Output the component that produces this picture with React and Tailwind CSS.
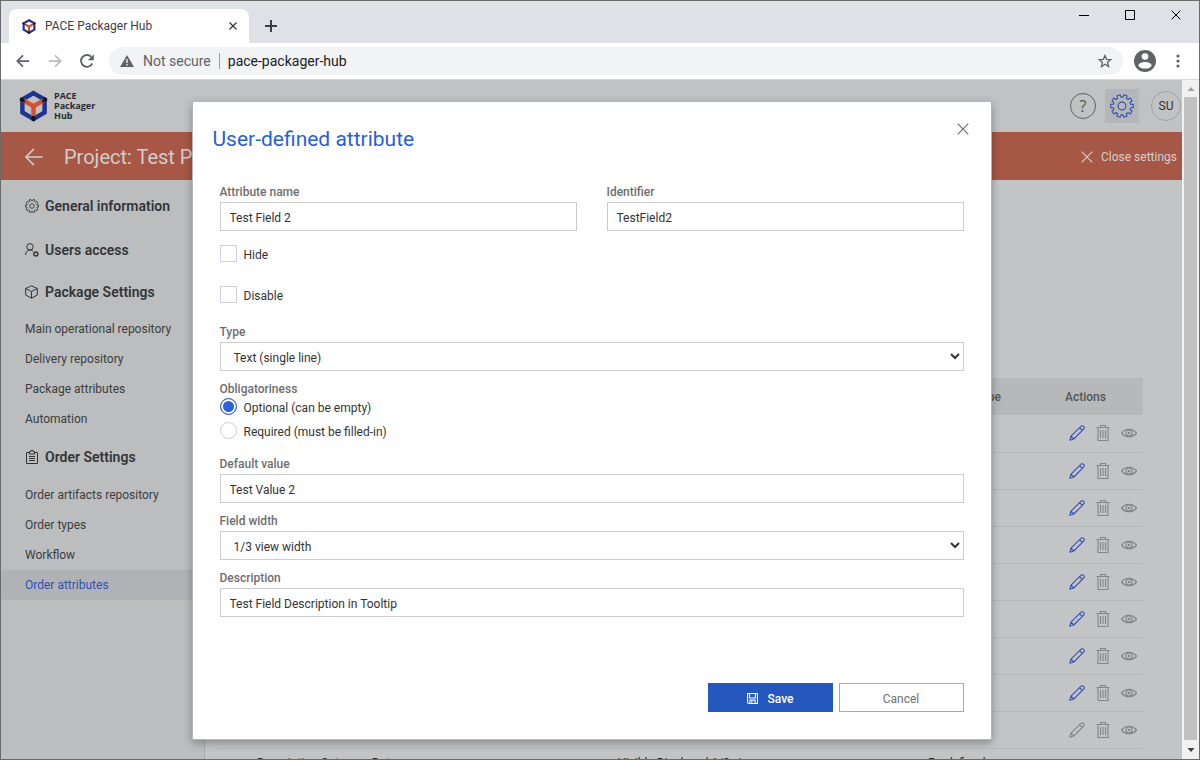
import { useState } from 'react';

const packageLinks = ['Main operational repository', 'Delivery repository', 'Package attributes', 'Automation'];
const orderLinks = ['Order artifacts repository', 'Order types', 'Workflow', 'Order attributes'];
const rows = [true, true, true, true, true, true, true, true, false];

function gearPath(teeth, outer, inner) {
    const step = (Math.PI * 2) / teeth;
    const point = (r, a) => `${(12 + r * Math.cos(a)).toFixed(2)} ${(12 + r * Math.sin(a)).toFixed(2)}`;
    let d = '';
    for (let i = 0; i < teeth; i++) {
        const a = i * step;
        d += `${i === 0 ? 'M' : 'L'}${point(inner, a - step * 0.32)}`;
        d += `L${point(outer, a - step * 0.23)}L${point(outer, a + step * 0.23)}`;
        d += `L${point(inner, a + step * 0.32)}`;
    }
    return d + 'Z';
}

function GearIcon({ className, strokeWidth = 1.1 }) {
    return (
        <svg className={className} viewBox="0 0 24 24" fill="none" stroke="currentColor" strokeWidth={strokeWidth} strokeLinejoin="round">
            <path d={gearPath(10, 11.4, 8.9)} />
            <circle cx="12" cy="12" r="3.9" />
        </svg>
    );
}

function Logo({ className }) {
    return (
        <svg className={className} viewBox="0 0 30 32" fill="none" strokeWidth="4.6">
            <path d="M15 2.7 26.5 9.3V22.7L15 29.3 3.5 22.7V9.3Z" stroke="#1e3590" />
            <path d="M5 10.5 15 16.3 25 10.5M15 16V27" stroke="#d5502d" />
            <path d="M.8 8.2 3.5 6.7 6.5 11.4 5.5 12.4.8 10.5ZM29.2 8.2 26.5 6.7 23.5 11.4 24.5 12.4 29.2 10.5ZM12.9 26.4H17.1V30.8L15 32 12.9 30.8Z" fill="#14161c" />
        </svg>
    );
}

function CrossIcon({ className, strokeWidth = 1.2 }) {
    return (
        <svg className={className} viewBox="0 0 12 12" fill="none" stroke="currentColor" strokeWidth={strokeWidth}>
            <path d="M.7.7 11.3 11.3M11.3.7.7 11.3" />
        </svg>
    );
}

function ArrowIcon({ className, strokeWidth = 1.8 }) {
    return (
        <svg className={className} viewBox="0 0 16 16" fill="none" stroke="currentColor" strokeWidth={strokeWidth}>
            <path d="M15 8H2M8 1.5 1.5 8 8 14.5" />
        </svg>
    );
}

function UserGearIcon() {
    return (
        <svg className="size-3.5" viewBox="0 0 14 14" fill="none" stroke="currentColor">
            <circle cx="5" cy="3.8" r="3.2" />
            <path d="M.5 12C.7 9 2.5 7 5 7c1.2 0 2.2.4 3 1.2" />
            <circle cx="10.8" cy="11" r="2" strokeWidth="1.4" />
        </svg>
    );
}

function BoxIcon() {
    return (
        <svg className="size-3.5" viewBox="0 0 14 14" fill="none" stroke="currentColor" strokeLinejoin="round">
            <path d="M6.5.8 12.3 3.5V10L6.5 13.2.7 10V3.5ZM.7 3.5 6.5 6.5 12.3 3.5M6.5 6.5V13" />
        </svg>
    );
}

function ClipboardIcon() {
    return (
        <svg className="size-3.5" viewBox="0 0 14 14" fill="none" stroke="currentColor">
            <path d="M4 2.5H1.5V13.5H12.5V2.5H10M4.5 1.5H6V.5H8V1.5H9.5V4H4.5ZM4 6.5H10M4 8.5H10M4 10.5H10" />
        </svg>
    );
}

function PencilIcon() {
    return (
        <svg className="size-4" viewBox="0 0 16 16" fill="none" stroke="currentColor" strokeWidth="1.1" strokeLinejoin="round">
            <path d="M.8 15.2 2 11.2 11.6 1.6C12.5.6 13.6.5 14.6 1.4 15.5 2.4 15.4 3.5 14.4 4.4L4.8 14ZM2 11.2 4.8 14M10.5 2.7 13.3 5.5" />
        </svg>
    );
}

function TrashIcon() {
    return (
        <svg className="h-4 w-3.5" viewBox="0 0 14 16" fill="none" stroke="currentColor" strokeWidth="1.1">
            <path d="M.5 2.5H13.5M4.5 2.5V.5H9.5V2.5M2 2.5V15.5H12V2.5M4.5 5V13M7 5V13M9.5 5V13" />
        </svg>
    );
}

function EyeIcon() {
    return (
        <svg className="h-4 w-4" viewBox="0 0 16 16" fill="none" stroke="currentColor" strokeWidth="1.2">
            <path d="M.5 8C2.7 5.3 5 4.3 8 4.3S13.3 5.3 15.5 8C13.3 10.7 11 11.7 8 11.7S2.7 10.7.5 8Z" />
            <circle cx="8" cy="8" r="3" />
            <circle cx="8" cy="8" r=".6" />
        </svg>
    );
}

function BrowserChrome() {
    return (
        <div className="shrink-0 border-b border-[#d5d7da] bg-[#dee1e6]">
            <div className="flex h-[42px] justify-between">
                <div className="flex items-end pl-2">
                    <div className="flex h-[34px] w-60 items-center rounded-t-lg bg-white pr-3 pl-[13px] text-[#3c4043]">
                        <Logo className="h-[15px] w-3.5" />
                        <span className="ml-[9px] flex-1 text-[12px]">PACE Packager Hub</span>
                        <button aria-label="Close tab"><CrossIcon className="size-2" strokeWidth={2} /></button>
                    </div>
                    <button aria-label="New tab" className="mb-[11px] ml-4">
                        <svg className="size-3" viewBox="0 0 12 12" stroke="#3c4043" strokeWidth="2"><path d="M6 0V12M0 6H12" /></svg>
                    </button>
                </div>
                <div className="flex h-7 items-center gap-9 pr-4.5 text-black">
                    <button aria-label="Minimize"><svg className="size-2.5" viewBox="0 0 10 10" stroke="currentColor"><path d="M0 5.5H10" /></svg></button>
                    <button aria-label="Maximize"><svg className="size-2.5" viewBox="0 0 10 10" fill="none" stroke="currentColor"><path d="M.5.5H9.5V9.5H.5Z" /></svg></button>
                    <button aria-label="Close"><CrossIcon className="size-2.5" /></button>
                </div>
            </div>
            <div className="flex h-9 items-center bg-white pr-[19px] pl-[15px] text-[#5f6368]">
                <button aria-label="Back"><ArrowIcon className="size-3.5" strokeWidth={2} /></button>
                <button aria-label="Forward" className="ml-[18px] text-[#b8babd]"><ArrowIcon className="size-3.5 rotate-180" strokeWidth={2} /></button>
                <button aria-label="Reload" className="ml-[18px]">
                    <svg className="size-3.5" viewBox="0 0 14 14"><path d="M12.3 9.5A5.9 5.9 0 1 1 11.2 2.8" fill="none" stroke="currentColor" strokeWidth="1.9" /><path d="M13.8.2V6.2H7.8Z" fill="currentColor" /></svg>
                </button>
                <div className="ml-[15px] flex h-7 flex-1 items-center rounded-full bg-[#f1f3f4] pr-[11px] pl-[11px] text-[14px]">
                    <svg className="h-3 w-3.5" viewBox="0 0 14 12"><path d="M7 0 14 12H0Z" fill="currentColor" /><path d="M7 4V8M7 9V10.5" stroke="#f1f3f4" strokeWidth="1.4" /></svg>
                    <span className="ml-[9px]">Not secure</span>
                    <span className="mx-2 h-4 w-px bg-[#9aa0a6]" />
                    <span className="flex-1 text-[#202124]">pace-packager-hub</span>
                    <button aria-label="Bookmark">
                        <svg className="size-3.5" viewBox="0 0 14 14" fill="none" stroke="currentColor" strokeWidth="1.3"><path d="M7 1.5 8.6 5.3 12.9 5.6 9.6 8.3 10.6 12.5 7 10.2 3.4 12.5 4.4 8.3 1.1 5.6 5.4 5.3Z" /></svg>
                    </button>
                </div>
                <button aria-label="Profile" className="ml-[11px]">
                    <svg className="size-[22px]" viewBox="0 0 22 22"><circle cx="11" cy="11" r="11" fill="currentColor" /><circle cx="11" cy="6.5" r="3.3" fill="#fff" /><ellipse cx="11" cy="15.3" rx="6.5" ry="3.3" fill="#fff" /></svg>
                </button>
                <button aria-label="Menu" className="ml-5">
                    <svg className="h-3.5 w-1" viewBox="0 0 4 14" fill="currentColor"><circle cx="2" cy="2" r="1.6" /><circle cx="2" cy="7" r="1.6" /><circle cx="2" cy="12" r="1.6" /></svg>
                </button>
            </div>
        </div>
    );
}

function TopBar() {
    return (
        <header className="flex h-[52px] shrink-0 items-center justify-between bg-[#c1c2c4] pr-px pl-[18px]">
            <div className="flex items-center gap-1.5">
                <Logo className="h-8 w-[29px]" />
                <div className="font-['Open_Sans',sans-serif] text-[9px] leading-[10px] font-bold text-[#2a2c30]">
                    <div>PACE</div>
                    <div>Packager</div>
                    <div>Hub</div>
                </div>
            </div>
            <div className="flex items-center">
                <button className="size-[26px] rounded-full border border-[#606060] font-['Open_Sans',sans-serif] text-[16px] leading-6 text-[#555]">?</button>
                <button aria-label="Settings" className="ml-[9px] flex size-[34px] items-center justify-center bg-[#b5b6b9] text-[#2e51ad]">
                    <GearIcon className="size-6" />
                </button>
                <button className="ml-3 size-[30px] rounded-full border border-[#a2a3a5] text-[12px] text-[#333]">SU</button>
            </div>
        </header>
    );
}

function SideHeading({ icon, children }) {
    return (
        <a href="#" className="flex items-center gap-1.5 pl-6 text-[14px] leading-5 font-semibold text-[#333537]">
            {icon}
            {children}
        </a>
    );
}

function SideLinks({ items, active }) {
    return (
        <ul>
            {items.map((item) => (
                <li key={item}>
                    <a
                        href="#"
                        className={`block rounded-l pl-6 text-[12px] leading-[30px] ${item === active ? 'bg-[#b1b2b5] text-[#2c52b4]' : 'text-[#3c3d40]'}`}
                    >
                        {item}
                    </a>
                </li>
            ))}
        </ul>
    );
}

function Sidebar() {
    return (
        <nav className="w-[204px] shrink-0 border-r border-[#a7a9ab] bg-[#bbbdbf] pt-4">
            <SideHeading icon={<GearIcon className="size-3.5" strokeWidth={1.5} />}>General information</SideHeading>
            <div className="mt-6">
                <SideHeading icon={<UserGearIcon />}>Users access</SideHeading>
            </div>
            <div className="mt-[22px] mb-3">
                <SideHeading icon={<BoxIcon />}>Package Settings</SideHeading>
            </div>
            <SideLinks items={packageLinks} />
            <div className="my-[13px]">
                <SideHeading icon={<ClipboardIcon />}>Order Settings</SideHeading>
            </div>
            <SideLinks items={orderLinks} active="Order attributes" />
        </nav>
    );
}

function AttributesTable() {
    return (
        <table className="w-full table-fixed border-collapse text-[12px] text-[#2a2a2a]">
            <colgroup>
                <col />
                <col className="w-[310px]" />
                <col className="w-[137px]" />
                <col className="w-[78px]" />
            </colgroup>
            <thead>
                <tr className="h-[37px] bg-[#b7b8ba] text-left text-[12px] text-[#555]">
                    <th className="pl-10 font-medium">Name</th>
                    <th className="font-medium">Properties</th>
                    <th className="font-medium">Attribute type</th>
                    <th className="font-medium">Actions</th>
                </tr>
            </thead>
            <tbody>
                {rows.map((editable, i) => (
                    <tr key={i} className="h-[37px] border-b border-[#b7b8ba]">
                        <td />
                        <td />
                        <td />
                        <td>
                            <div className="flex items-center gap-[11px] pl-1 text-[#858585]">
                                <button aria-label="Edit" className={editable ? 'text-[#3550b0]' : ''}><PencilIcon /></button>
                                <button aria-label="Delete"><TrashIcon /></button>
                                <button aria-label="Show"><EyeIcon /></button>
                            </div>
                        </td>
                    </tr>
                ))}
                <tr className="h-[37px] align-top leading-4">
                    <td className="pt-1.5 pl-10">Description Category Date</td>
                    <td className="pt-1.5">Visible Displayed 1/3 view</td>
                    <td className="pt-1.5">Predefined</td>
                    <td />
                </tr>
            </tbody>
        </table>
    );
}

function Field({ label, id, children }) {
    return (
        <div className="flex flex-1 flex-col">
            <label htmlFor={id} className="text-[12px] leading-5 font-medium text-[#6e6e6e]">{label}</label>
            {children}
        </div>
    );
}

function TextField({ label, id, value }) {
    return (
        <Field label={label} id={id}>
            <input id={id} type="text" defaultValue={value} className="h-[29px] w-full border border-[#ccc] bg-white px-[9px] pt-0.5 text-[12px] text-[#333]" />
        </Field>
    );
}

function SelectField({ label, id, options }) {
    return (
        <Field label={label} id={id}>
            <select id={id} className="h-[29px] w-full border border-[#ccc] bg-white pt-0.5 pl-[9px] text-[12px] text-[#333]">
                {options.map((o) => <option key={o}>{o}</option>)}
            </select>
        </Field>
    );
}

function Check({ label }) {
    return (
        <label className="flex h-[18px] gap-[7px] text-[12px] leading-5 text-[#333]">
            <input type="checkbox" className="size-[17px] appearance-none border border-[#cfcfe0] checked:bg-[#2b62d9]" />
            {label}
        </label>
    );
}

function Radio({ label, checked, onChange }) {
    return (
        <label className="flex h-[18px] gap-[7px] text-[12px] leading-5 text-[#333]">
            <input
                type="radio"
                name="obligatoriness"
                checked={checked}
                onChange={onChange}
                className="size-[17px] appearance-none rounded-full border border-[#ccc] checked:border-[#2b62d9] checked:bg-[#2b62d9] checked:shadow-[inset_0_0_0_2px_white]"
            />
            {label}
        </label>
    );
}

function AttributeDialog() {
    const [required, setRequired] = useState(false);

    return (
        <div role="dialog" aria-labelledby="dialog-title" className="w-full max-w-[800px] rounded-xs border border-[#b8b8b8] bg-white pb-[27px] shadow-[0_3px_9px_rgba(0,0,0,0.3)]">
            <div className="flex items-start justify-between pt-[21px] pr-[22px] pl-5">
                <h1 id="dialog-title" className="pt-0.5 text-[21px] leading-7 text-[#2b5fd0]">User-defined attribute</h1>
                <button aria-label="Close" className="text-[#707070]"><CrossIcon className="size-3" /></button>
            </div>
            <form className="px-[27px] pt-[29px]" onSubmit={(e) => e.preventDefault()}>
                <div className="flex gap-[30px]">
                    <TextField label="Attribute name" id="attr-name" value="Test Field 2" />
                    <TextField label="Identifier" id="identifier" value="TestField2" />
                </div>
                <div className="mt-3.5 mb-[18px] space-y-[23px]">
                    <Check label="Hide" />
                    <Check label="Disable" />
                </div>
                <SelectField label="Type" id="type" options={['Text (single line)', 'Text (multi line)']} />
                <fieldset className="mt-[9px] mb-3.5">
                    <legend className="text-[12px] leading-[18px] font-medium text-[#6e6e6e]">Obligatoriness</legend>
                    <div className="space-y-1.5">
                        <Radio label="Optional (can be empty)" checked={!required} onChange={() => setRequired(false)} />
                        <Radio label="Required (must be filled-in)" checked={required} onChange={() => setRequired(true)} />
                    </div>
                </fieldset>
                <div className="space-y-2">
                    <TextField label="Default value" id="default-value" value="Test Value 2" />
                    <SelectField label="Field width" id="field-width" options={['1/3 view width', '2/3 view width', 'Full width']} />
                    <TextField label="Description" id="description" value="Test Field Description in Tooltip" />
                </div>
                <div className="mt-[66px] flex justify-end gap-1.5 text-[12px]">
                    <button type="submit" className="flex h-[29px] w-[125px] items-center justify-center gap-2.5 bg-[#2558bf] pt-0.5 font-medium text-white">
                        <svg className="size-[11px]" viewBox="0 0 12 12" fill="none" stroke="currentColor" strokeWidth="1.2">
                            <path d="M.6.6H11.4V11.4H1.6L.6 10.4ZM2.8.6V5.5H9.2V.6M3.2 11.4V7.8H8.8V11.4M5.3 9V11.4" />
                        </svg>
                        Save
                    </button>
                    <button type="button" className="h-[29px] w-[125px] border border-[#a9a9a9] bg-white pt-0.5 text-[#707070]">Cancel</button>
                </div>
            </form>
        </div>
    );
}

function Scrollbar() {
    return (
        <div className="flex w-[17px] shrink-0 flex-col items-center justify-between bg-[#f1f1f1]">
            <svg className="h-[17px] w-2" viewBox="0 0 8 17"><path d="M4 7 7.5 11H.5Z" fill="#a0a0a0" /></svg>
            <div className="w-[13px] flex-1 bg-[#c1c1c1]" />
            <svg className="h-[19px] w-2" viewBox="0 0 8 19"><path d="M4 12 7.5 8H.5Z" fill="#404040" /></svg>
        </div>
    );
}

export default function App() {
    return (
        <div className="flex h-screen flex-col overflow-hidden border border-[#6b6b6b] font-[Roboto,'Open_Sans',sans-serif]">
            <BrowserChrome />
            <div className="flex min-h-0 flex-1">
                <div className="relative flex min-w-0 flex-1 flex-col overflow-hidden">
                    <TopBar />
                    <div className="flex h-12 shrink-0 items-center bg-[#a75745] pt-0.5 pr-[5px] pl-[23px] text-[#d0cecd]">
                        <a href="#" aria-label="Back to projects"><ArrowIcon className="size-5" strokeWidth={1.2} /></a>
                        <h2 className="ml-5 flex-1 text-[20px]">Project: Test Project</h2>
                        <button className="flex items-center gap-2 text-[12px]">
                            <CrossIcon className="size-3" />
                            Close settings
                        </button>
                    </div>
                    <div className="flex min-h-0 flex-1">
                        <Sidebar />
                        <main className="min-w-0 flex-1 bg-[#c3c4c6] pt-[198px] pr-[39px] pl-3">
                            <AttributesTable />
                        </main>
                    </div>
                    <div className="absolute inset-0 flex items-start justify-center pt-[21px]">
                        <AttributeDialog />
                    </div>
                </div>
                <Scrollbar />
            </div>
        </div>
    );
}
